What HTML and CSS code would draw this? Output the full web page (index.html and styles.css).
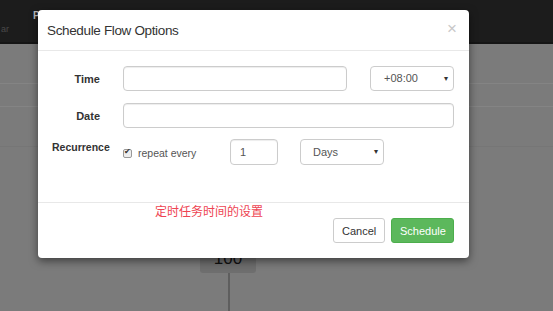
FILE: index.html
```html
<!DOCTYPE html>
<html lang="zh-CN">
<head>
    <meta charset="UTF-8">
    <title>Schedule Flow Options</title>
    <link rel="stylesheet" href="styles.css">
</head>
<body>

<header class="topbar">
    <span class="tab-muted">ar</span>
    <span class="tab-active">P</span>
</header>

<section class="canvas">
    <div class="strip"></div>
    <div class="strip"></div>
    <div class="strip"></div>
    <div class="node">100</div>
    <div class="edge"></div>
</section>

<div class="modal">
    <div class="modal-header">
        <h4 class="modal-title">Schedule Flow Options</h4>
        <span class="close">&times;</span>
    </div>
    <div class="modal-body">
        <div class="form-row">
            <label class="control-label">Time</label>
            <div class="controls">
                <input type="text" class="form-control time-input">
                <div class="select select-tz">+08:00<span class="caret">&#9662;</span></div>
            </div>
        </div>
        <div class="form-row">
            <label class="control-label">Date</label>
            <div class="controls">
                <input type="text" class="form-control date-input">
            </div>
        </div>
        <div class="form-row recur-row">
            <label class="control-label recur-label">Recurrence</label>
            <div class="controls">
                <span class="checkbox"><span class="tick">&#10004;</span></span>
                <span class="repeat-text">repeat every</span>
                <input type="text" class="form-control num-input" value="1">
                <div class="select select-unit">Days<span class="caret">&#9662;</span></div>
            </div>
        </div>
    </div>
    <div class="modal-footer">
        <div class="note">定时任务时间的设置</div>
        <div class="actions">
            <button class="btn btn-default">Cancel</button>
            <button class="btn btn-success">Schedule</button>
        </div>
    </div>
</div>

</body>
</html>
```

FILE: styles.css
```css
body {
    margin: 0;
    width: 553px;
    height: 311px;
    overflow: hidden;
    background-color: #7b7b7b;
    font-family: "Liberation Sans", Arial, sans-serif;
    position: relative;
}
.topbar {
    height: 42px;
    background-color: #1c1c1c;
    border-bottom: 2px solid #151515;
    position: relative;
}
.tab-muted {
    position: absolute;
    left: 1px;
    top: 24px;
    font-size: 9px;
    color: #4a4a4a;
}
.tab-active {
    position: absolute;
    left: 33px;
    top: 10px;
    font-size: 10px;
    font-weight: bold;
    color: #bbb;
}
.canvas {
    position: relative;
    height: 267px;
}
.strip {
    height: 22px;
    border-bottom: 1px solid #848484;
}
.strip:first-child {
    height: 39px;
}
.strip:nth-child(3) {
    height: 39px;
    border-bottom-color: #767676;
}
.node {
    position: absolute;
    left: 200px;
    top: 200px;
    width: 56px;
    height: 29px;
    background-color: #6e6e6e;
    border-radius: 3px;
    color: #111;
    font-size: 17px;
    text-align: center;
    line-height: 30px;
}
.edge {
    position: absolute;
    left: 228px;
    top: 229px;
    width: 2px;
    height: 40px;
    background-color: #5e5e5e;
}

/* modal */
.modal {
    position: absolute;
    left: 38px;
    top: 10px;
    width: 431px;
    height: 248px;
    background-color: #fff;
    border-radius: 4px;
    box-shadow: 0 3px 9px rgba(0, 0, 0, 0.5);
    display: flex;
    flex-direction: column;
}
.modal-header {
    height: 40px;
    border-bottom: 1px solid #e8e8e8;
    padding: 0 12px 0 9px;
    display: flex;
    align-items: center;
    justify-content: space-between;
}
.modal-title {
    margin: 0;
    font-size: 13.5px;
    letter-spacing: -0.35px;
    font-weight: normal;
    color: #333;
}
.close {
    font-size: 17px;
    color: #c8c8c8;
    margin-top: -2px;
}
.modal-body {
    padding: 15px 15px 0 14px;
    height: 136px;
}
.form-row {
    display: flex;
    align-items: center;
    margin-bottom: 12px;
}
.form-row:nth-child(2) {
    margin-bottom: 11px;
}
.control-label {
    width: 48px;
    margin-right: 23px;
    text-align: right;
    white-space: nowrap;
    font-size: 11px;
    font-weight: bold;
    color: #333;
}
.recur-row {
    align-items: flex-start;
}
.recur-label {
    margin-top: 2px;
    font-size: 10.5px;
}
.controls {
    display: flex;
    align-items: center;
    flex: 1;
}
.form-control {
    box-sizing: border-box;
    height: 25px;
    border: 1px solid #ccc;
    border-radius: 4px;
    box-shadow: inset 0 1px 1px rgba(0, 0, 0, 0.075);
    font-family: inherit;
    font-size: 11px;
    color: #555;
    padding: 0 9px;
    margin: 0;
}
.time-input {
    width: 224px;
    margin-right: 23px;
}
.date-input {
    width: 331px;
}
.select {
    box-sizing: border-box;
    width: 84px;
    height: 25px;
    border: 1px solid #ccc;
    border-radius: 4px;
    font-size: 11px;
    color: #555;
    padding-left: 13px;
    line-height: 23px;
    position: relative;
}
.caret {
    position: absolute;
    right: 5px;
    top: 0;
    font-size: 8px;
    color: #333;
}
.checkbox {
    box-sizing: border-box;
    width: 9px;
    height: 9px;
    border: 1px solid #999;
    border-radius: 2px;
    background-color: #eee;
    position: relative;
    margin-right: 6px;
    margin-top: 2px;
}
.tick {
    position: absolute;
    left: 0;
    top: -3px;
    font-size: 8px;
    color: #333;
}
.repeat-text {
    font-size: 10.5px;
    color: #555;
    width: 92px;
    margin-top: 2px;
}
.num-input {
    width: 48px;
    height: 26px;
    margin-right: 22px;
}
.select-unit {
    height: 26px;
    line-height: 24px;
    padding-left: 12px;
}
.modal-footer {
    border-top: 1px solid #e8e8e8;
    padding: 0 15px 15px;
    flex: 1;
}
.note {
    margin-left: 102px;
    height: 15px;
    line-height: 15px;
    font-size: 12px;
    color: #ee4452;
    font-family: "Noto Sans CJK SC", sans-serif;
}
.actions {
    display: flex;
    justify-content: flex-end;
}
.btn {
    height: 25px;
    border-radius: 3px;
    font-family: inherit;
    font-size: 11px;
    padding: 0 8px;
    margin-left: 6px;
}
.btn-default {
    width: 52px;
    background-color: #fff;
    border: 1px solid #ccc;
    color: #333;
}
.btn-success {
    width: 63px;
    background-color: #5cb85c;
    border: 1px solid #4cae4c;
    color: #fff;
}
```
